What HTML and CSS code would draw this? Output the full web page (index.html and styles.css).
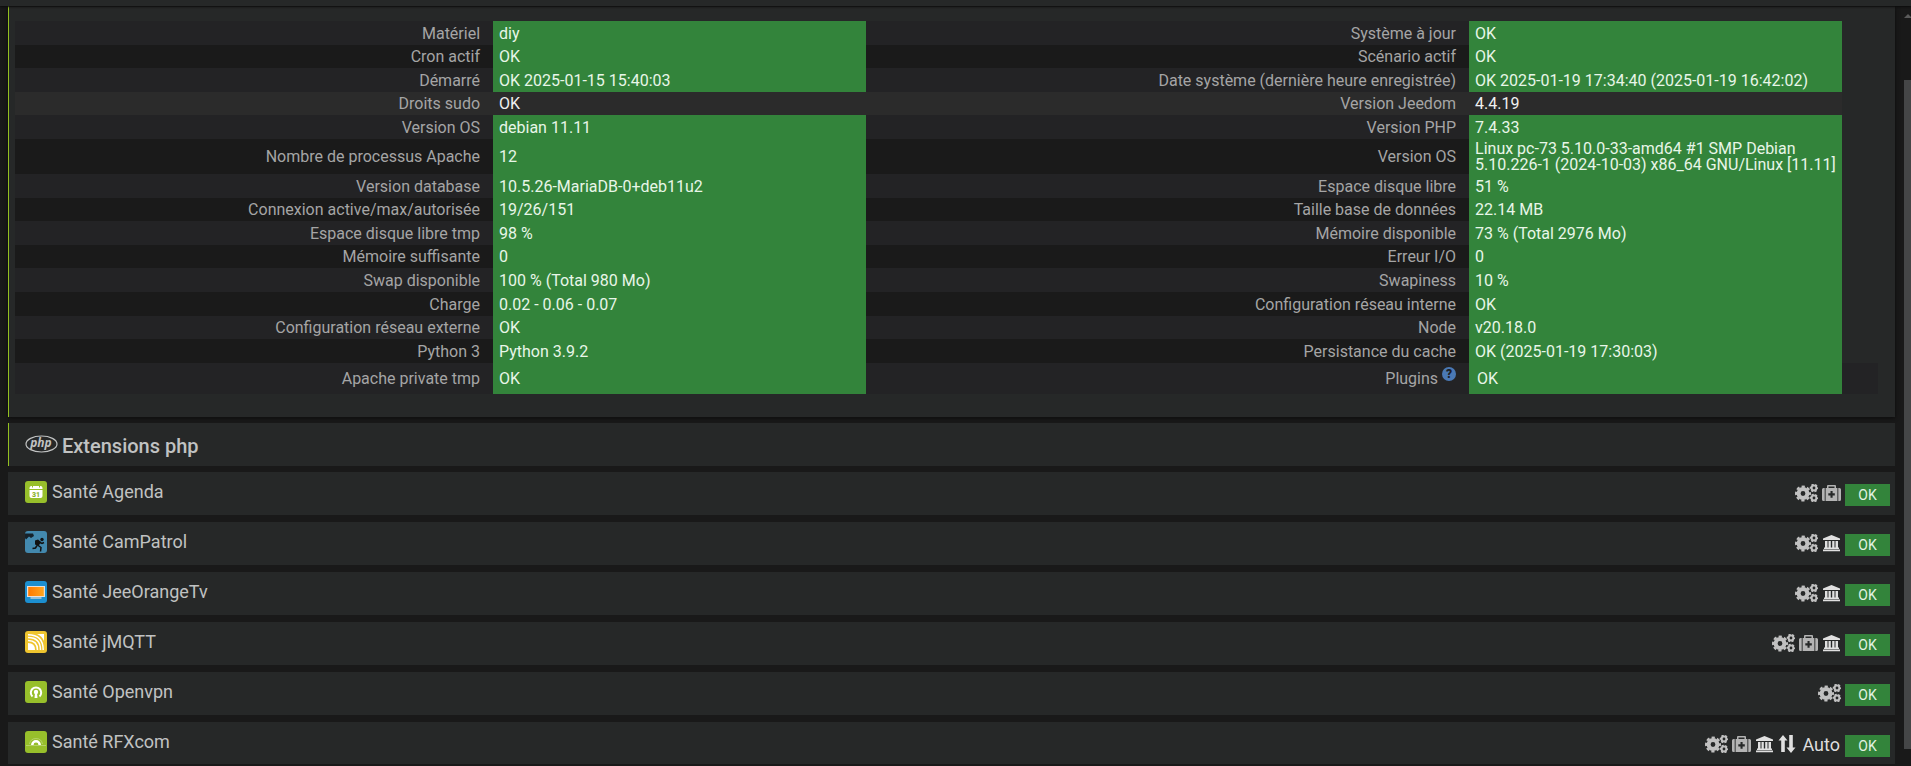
FILE: index.html
```
<!DOCTYPE html>
<html lang="fr">
<head>
<meta charset="utf-8">
<title>Santé</title>
<link rel="stylesheet" href="styles.css">
</head>
<body>
<svg class="defs" aria-hidden="true">
  <symbol id="i-cogs" viewBox="0 0 23 18">
    <g fill="none" stroke="currentColor">
      <circle cx="8" cy="9.500" r="4.400" stroke-width="4"/>
      <circle cx="8" cy="9.500" r="6.900" stroke-width="2.200" stroke-dasharray="3.200 2.220" stroke-dashoffset="1.600"/>
      <circle cx="19" cy="4" r="2.400" stroke-width="2"/>
      <circle cx="19" cy="4" r="3.600" stroke-width="1.400" stroke-dasharray="2.200 1.570" stroke-dashoffset="1.100"/>
      <circle cx="19" cy="14" r="2.400" stroke-width="2"/>
      <circle cx="19" cy="14" r="3.600" stroke-width="1.400" stroke-dasharray="2.200 1.570" stroke-dashoffset="1.100"/>
    </g>
  </symbol>
  <symbol id="i-medkit" viewBox="0 0 19 18">
    <path fill="currentColor" fill-rule="evenodd" d="M1.500 4H2.700V17H1.500Q0 17 0 15.500V5.500Q0 4 1.500 4ZM16.300 4H17.500Q19 4 19 5.500V15.500Q19 17 17.500 17H16.300ZM3.600 4H5V2Q5 1 6 1H13Q14 1 14 2V4H15.400V17H3.600ZM6.500 2.500V4H12.500V2.500ZM8.500 7V9.300H6.300V11.500H8.500V13.800H10.600V11.500H12.800V9.300H10.600V7Z"/>
  </symbol>
  <symbol id="i-bank" viewBox="0 0 18 18">
    <path fill="currentColor" d="M9 1L17.500 4.500V6H.500V4.500ZM2.500 7H5V13.500H6V7H8.300V13.500H9.700V7H12V13.500H13V7H15.500V13.500H16.500V15H1.500V13.500H2.500ZM.500 15.500H17.500V17.200H.500Z"/>
  </symbol>
  <symbol id="i-arrows" viewBox="0 0 18 20">
    <path fill="currentColor" d="M5 1L9.500 6.500H6.800V18H3.200V6.500H.500ZM11.200 1H14.800V13.500H17.500L13 19L8.500 13.500H11.200Z"/>
  </symbol>
</svg>

<header class="topbar"></header>
<main class="content">
  <section class="panel panel-system">
    <table class="health">
      <colgroup><col class="c-label"><col class="c-value"><col class="c-label2"><col class="c-value"><col></colgroup>
      <tbody>
        <tr><th>Matériel</th><td class="ok">diy</td><th>Système à jour</th><td class="ok">OK</td><td class="end"></td></tr>
        <tr><th>Cron actif</th><td class="ok">OK</td><th>Scénario actif</th><td class="ok">OK</td><td class="end"></td></tr>
        <tr><th>Démarré</th><td class="ok">OK 2025-01-15 15:40:03</td><th>Date système (dernière heure enregistrée)</th><td class="ok">OK 2025-01-19 17:34:40 (2025-01-19 16:42:02)</td><td class="end"></td></tr>
        <tr class="active"><th>Droits sudo</th><td>OK</td><th>Version Jeedom</th><td>4.4.19</td><td class="end"></td></tr>
        <tr><th>Version OS</th><td class="ok">debian 11.11</td><th>Version PHP</th><td class="ok">7.4.33</td><td class="end"></td></tr>
        <tr class="tall"><th>Nombre de processus Apache</th><td class="ok">12</td><th>Version OS</th><td class="ok">Linux pc-73 5.10.0-33-amd64 #1 SMP Debian 5.10.226-1 (2024-10-03) x86_64 GNU/Linux [11.11]</td><td class="end"></td></tr>
        <tr><th>Version database</th><td class="ok">10.5.26-MariaDB-0+deb11u2</td><th>Espace disque libre</th><td class="ok">51 %</td><td class="end"></td></tr>
        <tr><th>Connexion active/max/autorisée</th><td class="ok">19/26/151</td><th>Taille base de données</th><td class="ok">22.14 MB</td><td class="end"></td></tr>
        <tr><th>Espace disque libre tmp</th><td class="ok">98 %</td><th>Mémoire disponible</th><td class="ok">73 % (Total 2976 Mo)</td><td class="end"></td></tr>
        <tr><th>Mémoire suffisante</th><td class="ok">0</td><th>Erreur I/O</th><td class="ok">0</td><td class="end"></td></tr>
        <tr><th>Swap disponible</th><td class="ok">100 % (Total 980 Mo)</td><th>Swapiness</th><td class="ok">10 %</td><td class="end"></td></tr>
        <tr><th>Charge</th><td class="ok">0.02 - 0.06 - 0.07</td><th>Configuration réseau interne</th><td class="ok">OK</td><td class="end"></td></tr>
        <tr><th>Configuration réseau externe</th><td class="ok">OK</td><th>Node</th><td class="ok">v20.18.0</td><td class="end"></td></tr>
        <tr><th>Python 3</th><td class="ok">Python 3.9.2</td><th>Persistance du cache</th><td class="ok">OK (2025-01-19 17:30:03)</td><td class="end"></td></tr>
        <tr class="last"><th>Apache private tmp</th><td class="ok">OK</td><th>Plugins <span class="help">?</span></th><td class="ok inner">OK</td><td></td></tr>
      </tbody>
    </table>
  </section>

  <section class="panel panel-php">
    <svg class="php" viewBox="0 0 33 18" aria-hidden="true"><ellipse cx="16.500" cy="9" rx="15.500" ry="8" fill="none" stroke="currentColor" stroke-width="1.200"/><text class="php-text" x="16" y="12" text-anchor="middle">php</text></svg>
    <h2>Extensions php</h2>
  </section>

  <section class="panel plugin">
    <a class="name" href="#agenda"><svg class="logo" viewBox="0 0 22 22"><rect width="22" height="22" rx="3" fill="#97bf2b"/><rect x="4.500" y="5" width="13" height="12" rx="2" fill="#fff"/><path d="M4 8.500H18M7.500 4V6.500M14.500 4V6.500" stroke="#97bf2b" stroke-width="1"/><text class="day" x="11" y="15.500" text-anchor="middle">31</text></svg>Santé Agenda</a>
    <span class="state"><svg class="cogs"><use href="#i-cogs"/></svg><svg class="medkit"><use href="#i-medkit"/></svg><span class="badge">OK</span></span>
  </section>
  <section class="panel plugin">
    <a class="name" href="#campatrol"><svg class="logo" viewBox="0 0 22 22"><rect width="22" height="22" rx="3" fill="#4389ae"/><path d="M0 2.500L8 2.500L9 5L6 7L4 5.500L1 8.500L0 7Z" fill="#15222b"/><circle cx="17" cy="8.500" r="1.700" fill="#111"/><path d="M10 9.500L13 8.500L16 11L13.500 15L10 13.500Z" fill="#111"/><path d="M14 11L17 12.500L19 11.500M12.500 14L16 16.500L15.500 20.500M12 14.500L10.500 17L7.500 17.500" fill="none" stroke="#111" stroke-width="1.500"/></svg>Santé CamPatrol</a>
    <span class="state"><svg class="cogs"><use href="#i-cogs"/></svg><svg class="bank"><use href="#i-bank"/></svg><span class="badge">OK</span></span>
  </section>
  <section class="panel plugin">
    <a class="name" href="#jeeorangetv"><svg class="logo" viewBox="0 0 22 22"><defs><linearGradient id="tv"><stop offset="0" stop-color="#ff7a00"/><stop offset="1" stop-color="#ffa51f"/></linearGradient></defs><rect width="22" height="22" rx="3" fill="#1c8fd0"/><rect x="2" y="5" width="18" height="11" fill="#e6e0dc"/><rect x="3.200" y="6" width="15.600" height="9" fill="url(#tv)"/><path d="M5.500 17H16.500" stroke="#e6e0dc" stroke-width="1.200"/></svg>Santé JeeOrangeTv</a>
    <span class="state"><svg class="cogs"><use href="#i-cogs"/></svg><svg class="bank"><use href="#i-bank"/></svg><span class="badge">OK</span></span>
  </section>
  <section class="panel plugin">
    <a class="name" href="#jmqtt"><svg class="logo" viewBox="0 0 22 22"><rect width="22" height="22" rx="3" fill="#efc52f"/><path d="M3 12Q10 12 10 19H3Z" fill="#fff"/><path d="M3 9.500Q12.500 9.500 12.500 19M3 6.500Q15.500 6.500 15.500 19M3 3.800Q18.200 3.800 18.200 19" fill="none" stroke="#fff" stroke-width="1.500"/><path d="M12 3H19V10Q17 5 12 3Z" fill="#fff"/></svg>Santé jMQTT</a>
    <span class="state"><svg class="cogs"><use href="#i-cogs"/></svg><svg class="medkit"><use href="#i-medkit"/></svg><svg class="bank"><use href="#i-bank"/></svg><span class="badge">OK</span></span>
  </section>
  <section class="panel plugin">
    <a class="name" href="#openvpn"><svg class="logo" viewBox="0 0 22 22"><rect width="22" height="22" rx="3" fill="#97bf2b"/><path d="M7.500 15.500A5.200 5.200 0 1 1 14.500 15.500" fill="none" stroke="#fff" stroke-width="2"/><circle cx="11" cy="11" r="2.200" fill="#fff"/><path d="M10 12H12L12.500 17H9.500Z" fill="#fff"/></svg>Santé Openvpn</a>
    <span class="state"><svg class="cogs"><use href="#i-cogs"/></svg><span class="badge">OK</span></span>
  </section>
  <section class="panel plugin">
    <a class="name" href="#rfxcom"><svg class="logo" viewBox="0 0 22 22"><rect width="22" height="22" rx="3" fill="#97bf2b"/><path d="M1 14.500H21" stroke="#bcd67a" stroke-width=".800"/><path d="M7.300 14A3.700 3.700 0 0 1 14.700 14" fill="none" stroke="#fff" stroke-width="2.500"/><path d="M4.500 13A6.600 6.600 0 0 1 17.500 13" fill="none" stroke="#c8de92" stroke-width=".600"/></svg>Santé RFXcom</a>
    <span class="state"><svg class="cogs"><use href="#i-cogs"/></svg><svg class="medkit"><use href="#i-medkit"/></svg><svg class="bank"><use href="#i-bank"/></svg><svg class="arrows"><use href="#i-arrows"/></svg><span class="auto">Auto</span><span class="badge">OK</span></span>
  </section>
</main>
<div class="scrollbar" aria-hidden="true"><span class="arrow"></span><span class="thumb"></span></div>
</body>
</html>
```
FILE: styles.css
```
* { box-sizing: border-box; }
html, body { height: 100%; }
body {
  margin: 0;
  display: grid;
  grid-template-columns: 1fr 7px;
  grid-template-rows: 6px 1fr;
  overflow: hidden;
  background: #191919;
  color: #c0c2c2;
  font-family: Roboto, sans-serif;
}
.defs { position: absolute; width: 0; height: 0; }
.topbar {
  grid-column: 1 / -1;
  background: #262828;
  box-shadow: 0 1px 2px #0c0c0c;
  z-index: 1;
}
.content {
  display: flex;
  flex-direction: column;
  gap: 7px;
  min-height: 0;
  overflow: hidden;
  padding: 0 9px 0 8px;
}
.panel { flex: none; background: #262828; }
.panel-system {
  border-left: 1px solid #93c020;
  padding: 15px 17px 23px 6px;
  box-shadow: 0 1px 4px #0c0c0c;
  margin-bottom: -1px;
}
.health {
  width: 100%;
  table-layout: fixed;
  border-collapse: collapse;
  font-size: 16px;
  line-height: 16px;
}
.c-label { width: 25.66%; }
.c-label2 { width: 32.37%; }
.c-value { width: 20.02%; }
.health tr { height: 24px; background: #232325; }
.health tr:nth-child(even) { height: 23px; background: #1a1a1a; }
.health tr:nth-child(12), .health tr:nth-child(14) { height: 24px; }
.health tr:nth-child(13) { height: 23px; }
.health tr.active { background: #2b2b2b; }
.health tr.tall { height: 35px; }
.health tr.last { height: 31px; }
.health th {
  padding: 1px 13px 0 0;
  text-align: right;
  font-weight: 400;
  color: #a5a5a5;
}
.health td { padding: 1px 5px 0 6px; color: #f0f0f0; }
.health .ok { background: #33843b; color: #e8f6e8; }
.health .inner { padding-left: 8px; }
.health .end { background: #262828; }
.help {
  display: inline-block;
  width: 14px;
  height: 14px;
  margin-top: -8px;
  vertical-align: 6px;
  border-radius: 50%;
  background: #4a79b5;
  color: #1d2026;
  font-size: 12px;
  font-weight: 900;
  line-height: 14px;
  text-align: center;
}

.panel-php {
  display: flex;
  align-items: center;
  gap: 4px;
  height: 43px;
  margin-bottom: -1px;
  padding: 3px 0 0 16px;
  border-left: 1px solid #93c020;
}
.php { width: 33px; height: 18px; margin-bottom: 4px; }
.php-text { font: italic 700 12px "Open Sans", sans-serif; fill: currentColor; }
.panel-php h2 { margin: 0; font-size: 20px; line-height: 24px; font-weight: 500; }
.plugin {
  display: flex;
  justify-content: space-between;
  align-items: flex-start;
  height: 43px;
  padding: 9px 5px 0 17px;
}
.plugin:last-child { height: 42px; }
.name {
  display: flex;
  align-items: center;
  gap: 5px;
  color: inherit;
  text-decoration: none;
  font-size: 18px;
  line-height: 22px;
}
.logo { width: 22px; height: 22px; }
.day { font: 900 7px Roboto, sans-serif; fill: #8ab32a; }
.state { display: flex; align-items: center; gap: 4px; padding-top: 3px; }
.state svg { height: 18px; margin-bottom: 4px; }
.cogs { width: 23px; color: #c0c0c0; }
.medkit { width: 19px; color: #b4b4b4; }
.bank { width: 19px; color: #e0e0e0; }
.state .arrows { width: 18px; height: 20px; color: #e0e0e0; }
.auto { font-size: 18px; line-height: 20px; color: #dedede; margin: 0 1px 2px 2px; }
.badge {
  width: 45px;
  height: 22px;
  background: #33843b;
  color: #e2f2e2;
  font-size: 14px;
  line-height: 22px;
  text-align: center;
}
.scrollbar { display: flex; flex-direction: column; padding-top: 8px; background: #191919; }
.arrow { border: 4px solid transparent; border-top: 0; border-bottom-color: #5a5a5a; }
.thumb { height: 89%; margin-top: 62px; flex: none; background: #454647; }
```
